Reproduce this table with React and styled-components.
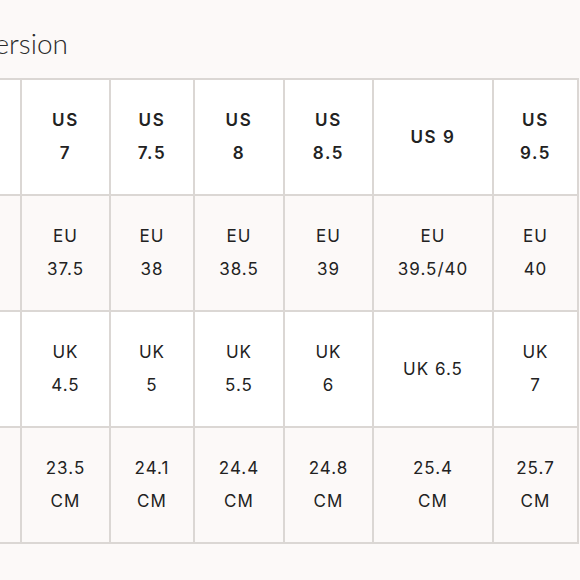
import styled, { createGlobalStyle } from "styled-components";

const GlobalStyle = createGlobalStyle`
  body {
    margin: 0;
    background-color: #fcf9f8;
    font-family: Inter, "Liberation Sans", sans-serif;
    color: #222;
  }
`;

const Page = styled.div`
  width: 580px;
  height: 580px;
  overflow: hidden;
  display: flex;
  flex-direction: column;
`;

const TitleClip = styled.div`
  width: 68px;
  height: 78px;
  display: flex;
  justify-content: flex-end;
  align-items: flex-start;
  overflow: hidden;
`;

const Title = styled.h2`
  margin: 29px 0 0;
  font-family: Lato, "Liberation Sans", sans-serif;
  font-weight: 300;
  font-size: 28px;
  line-height: 1;
  color: #2a2a2a;
  white-space: nowrap;
`;

const Grid = styled.div`
  display: grid;
  grid-template-columns: 98px 87px 82px 88px 87px 118px 83px;
  grid-auto-rows: 114px;
  gap: 2px;
  padding: 2px;
  margin-left: -80px;
  width: max-content;
  background-color: #dbd7d4;
`;

const Cell = styled.div`
  display: flex;
  flex-direction: column;
  align-items: center;
  justify-content: center;
  background-color: ${({ $tinted }) => ($tinted ? "#fcf9f8" : "#ffffff")};
  font-size: 17px;
  font-weight: ${({ $head }) => ($head ? 600 : 400)};
  letter-spacing: ${({ $head }) => ($head ? "1.6px" : "1px")};
  line-height: 33px;
  color: #222;
`;

const rows = [
  {
    head: true,
    cells: [["US", "7"], ["US", "7.5"], ["US", "8"], ["US", "8.5"], ["US 9"], ["US", "9.5"]],
  },
  {
    cells: [["EU", "37.5"], ["EU", "38"], ["EU", "38.5"], ["EU", "39"], ["EU", "39.5/40"], ["EU", "40"]],
  },
  {
    cells: [["UK", "4.5"], ["UK", "5"], ["UK", "5.5"], ["UK", "6"], ["UK 6.5"], ["UK", "7"]],
  },
  {
    cells: [["23.5", "CM"], ["24.1", "CM"], ["24.4", "CM"], ["24.8", "CM"], ["25.4", "CM"], ["25.7", "CM"]],
  },
];

export default function App() {
  return (
    <Page>
      <GlobalStyle />
      <TitleClip>
        <Title>Size Conversion</Title>
      </TitleClip>
      <Grid>
        {rows.map((row, r) => (
          <>
            <Cell key={`l${r}`} $tinted={r % 2 === 1} />
            {row.cells.map((lines, c) => (
              <Cell key={`${r}-${c}`} $tinted={r % 2 === 1} $head={row.head}>
                {lines.map((t) => (
                  <span key={t}>{t}</span>
                ))}
              </Cell>
            ))}
          </>
        ))}
      </Grid>
    </Page>
  );
}
